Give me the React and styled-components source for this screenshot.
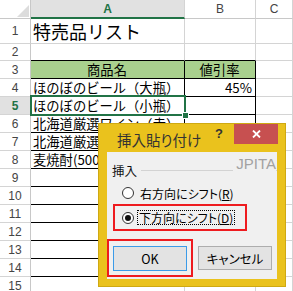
import React from 'react';
import styled, { createGlobalStyle, css } from 'styled-components';

const GlobalStyle = createGlobalStyle`
  html, body { margin: 0; padding: 0; background: #fff; overflow: hidden; }
  body { font-family: "Noto Sans CJK JP", "Noto Sans", sans-serif; }
  *, *::before, *::after { box-sizing: border-box; }
`;

const GRID = '#d4d4d4';
const HEAD_LINE = '#c8c8c8';
const GREEN = '#217346';
const RED = '#ee1b1f';

const Sheet = styled.div`
  position: relative;
  width: 293px;
  height: 291px;
  overflow: hidden;
  display: flex;
  flex-direction: column;
  background: #fff;
`;

const Row = styled.div`
  display: flex;
  flex: none;
  height: ${(p) => p.$h}px;
`;

const Corner = styled.div`
  position: relative;
  width: 31px;
  flex: none;
  border-right: 1px solid ${HEAD_LINE};
  border-bottom: 1px solid ${HEAD_LINE};
  &::after {
    content: '';
    position: absolute;
    right: 1px;
    bottom: 1px;
    border-left: 12px solid transparent;
    border-bottom: 12px solid #dcdcdc;
  }
`;

const ColHeader = styled.div`
  width: ${(p) => p.$w}px;
  flex: ${(p) => (p.$grow ? '1' : 'none')};
  display: flex;
  align-items: center;
  justify-content: center;
  font-family: "Liberation Sans", Arial, sans-serif;
  font-size: 12px;
  color: #444;
  border-right: 1px solid ${GRID};
  border-bottom: 1px solid ${HEAD_LINE};
  ${(p) =>
    p.$active &&
    css`
      background: #e1e1e1;
      color: ${GREEN};
      font-weight: bold;
      border-bottom: 2px solid ${GREEN};
    `}
`;

const RowHeader = styled.div`
  width: 31px;
  flex: none;
  display: flex;
  align-items: center;
  justify-content: center;
  font-family: "Liberation Sans", Arial, sans-serif;
  font-size: 12px;
  color: #444;
  border-right: 1px solid ${HEAD_LINE};
  border-bottom: 1px solid ${GRID};
  ${(p) =>
    p.$active &&
    css`
      background: #e1e1e1;
      color: ${GREEN};
      font-weight: bold;
    `}
`;

const Cell = styled.div`
  width: ${(p) => p.$w}px;
  flex: ${(p) => (p.$grow ? '1' : 'none')};
  display: flex;
  align-items: center;
  justify-content: ${(p) => p.$align || 'flex-start'};
  padding: 0 3px 0 2px;
  overflow: hidden;
  white-space: nowrap;
  font-size: ${(p) => (p.$big ? '18px' : '13.3px')};
  color: #000;
  background: ${(p) => (p.$fill ? '#a9d08e' : 'transparent')};
  border-right: 1px solid ${(p) => (p.$boxRight ? '#000' : GRID)};
  border-bottom: 1px solid ${(p) => (p.$boxBottom ? '#000' : GRID)};
`;

const Selection = styled.div`
  position: absolute;
  left: 30px;
  top: 95px;
  width: 156px;
  height: 21px;
  border: 2px solid ${GREEN};
  pointer-events: none;
  &::after {
    content: '';
    position: absolute;
    right: -5px;
    bottom: -5px;
    width: 7px;
    height: 7px;
    background: ${GREEN};
    border: 1px solid #fff;
  }
`;

/* ---------- dialog ---------- */

const Dialog = styled.div`
  position: absolute;
  left: 98px;
  top: 123px;
  width: 188px;
  height: 164px;
  background: #eac21d;
  border: 1px solid #cfa912;
  display: flex;
  flex-direction: column;
  font-family: "Noto Sans CJK JP", "Noto Sans", sans-serif;
  font-feature-settings: "palt";
`;

const TitleBar = styled.div`
  height: 28px;
  flex: none;
  display: flex;
  align-items: flex-start;
`;

const Title = styled.div`
  flex: 1;
  margin: 6px 0 0 18px;
  font-size: 14.5px;
  line-height: 20px;
  color: #333;
  white-space: nowrap;
`;

const Help = styled.div`
  width: 14px;
  margin: 0 8px 0 0;
  font-family: "Liberation Sans", Arial, sans-serif;
  font-weight: bold;
  font-size: 13px;
  line-height: 20px;
  text-align: center;
  color: #333;
`;

const CloseButton = styled.div`
  width: 44px;
  height: 20px;
  margin-right: 7px;
  background: #c75050;
  display: flex;
  align-items: center;
  justify-content: center;
`;

const Client = styled.div`
  position: relative;
  flex: 1;
  margin: 0 8px 7px 8px;
  padding-top: 8px;
  background: #f0f0f0;
  display: flex;
  flex-direction: column;
`;

const Watermark = styled.div`
  position: absolute;
  right: 1px;
  top: 3px;
  padding-left: 3px;
  background: #f0f0f0;
  font-family: "Liberation Sans", Arial, sans-serif;
  font-size: 15px;
  color: #a2a2a2;
`;

const GroupHeader = styled.div`
  height: 20px;
  display: flex;
  align-items: center;
  padding-left: 5px;
  font-size: 12.5px;
  color: #111;
`;

const GroupLine = styled.div`
  flex: 1;
  height: 1px;
  margin-left: 4px;
  background: #d3d3d3;
`;

const OptionRow = styled.div`
  height: 18px;
  margin-top: 4px;
  display: flex;
  align-items: center;
  padding-left: 15px;
`;

const RedFrame = styled.div`
  border: 2px solid ${RED};
`;

const OptionFrame = styled(RedFrame)`
  width: 134px;
  height: 27px;
  margin: 2px 0 0 6px;
  display: flex;
  align-items: center;
  padding-left: 7px;
`;

const Radio = styled.span`
  position: relative;
  width: 12px;
  height: 12px;
  flex: none;
  border: 1px solid #333;
  border-radius: 50%;
  background: #fff;
  ${(p) =>
    p.$checked &&
    css`
      &::after {
        content: '';
        position: absolute;
        left: 2px;
        top: 2px;
        width: 6px;
        height: 6px;
        border-radius: 50%;
        background: #111;
      }
    `}
`;

const OptionLabel = styled.span`
  margin-left: ${(p) => (p.$focus ? '3px' : '4px')};
  padding: 0 1px;
  font-size: 12px;
  line-height: 13px;
  color: #000;
  white-space: nowrap;
  border: 1px ${(p) => (p.$focus ? 'dotted #000' : 'solid transparent')};
  u { text-decoration-thickness: 1px; text-underline-offset: 1px; }
`;

const ButtonRow = styled.div`
  margin-top: 8px;
  display: flex;
  align-items: center;
  gap: 5px;
`;

const ButtonFrame = styled(RedFrame)`
  padding: 5px 4px 4px 4px;
`;

const Button = styled.div`
  width: 74px;
  height: ${(p) => (p.$primary ? 25 : 24)}px;
  display: flex;
  align-items: center;
  justify-content: center;
  background: #e3e3e3;
  border: 1px solid ${(p) => (p.$primary ? '#3c9be8' : '#adadad')};
  font-size: 12.5px;
  color: #000;
`;

const CloseIcon = () => (
  <svg width="9" height="8" viewBox="0 0 9 8">
    <path d="M1 0.5 L8 7.5 M8 0.5 L1 7.5" stroke="#fff" strokeWidth="1.8" />
  </svg>
);

const rows = [
  { n: 1, h: 25, a: '特売品リスト', big: true },
  { n: 2, h: 17, above: true },
  { n: 3, h: 18, a: '商品名', b: '値引率', head: true, table: true },
  { n: 4, h: 18, a: 'ほのぼのビール（大瓶）', b: '45%', table: true },
  { n: 5, h: 18, a: 'ほのぼのビール（小瓶）', table: true, active: true },
  { n: 6, h: 18, a: '北海道厳選ワイン（赤）', table: true },
  { n: 7, h: 18, a: '北海道厳選ワイン（白）', table: true },
  { n: 8, h: 18, a: '麦焼酎(500ml)', table: true },
  { n: 9, h: 18, table: true },
  { n: 10, h: 18, table: true },
  { n: 11, h: 18, table: true },
  { n: 12, h: 18, table: true },
  { n: 13, h: 18, table: true },
  { n: 14, h: 18, table: true },
  { n: 15, h: 18 },
];

export default function App() {
  return (
    <>
      <GlobalStyle />
      <Sheet>
        <Row $h={19}>
          <Corner />
          <ColHeader $w={154} $active>A</ColHeader>
          <ColHeader $w={71}>B</ColHeader>
          <ColHeader $w={37} $grow>C</ColHeader>
        </Row>
        {rows.map((r) => (
          <Row key={r.n} $h={r.h}>
            <RowHeader $active={r.active}>{r.n}</RowHeader>
            <Cell
              $w={154}
              $big={r.big}
              $fill={r.head}
              $align={r.head ? 'center' : 'flex-start'}
              $boxRight={r.table}
              $boxBottom={r.table || r.above}
            >
              {r.a}
            </Cell>
            <Cell
              $w={71}
              $fill={r.head}
              $align={r.head ? 'center' : 'flex-end'}
              $boxRight={r.table}
              $boxBottom={r.table || r.above}
            >
              {r.b}
            </Cell>
            <Cell $w={37} $grow />
          </Row>
        ))}
        <Selection />

        <Dialog>
          <TitleBar>
            <Title>挿入貼り付け</Title>
            <Help>?</Help>
            <CloseButton>
              <CloseIcon />
            </CloseButton>
          </TitleBar>
          <Client>
            <Watermark>JPITA</Watermark>
            <GroupHeader>
              挿入
              <GroupLine />
            </GroupHeader>
            <OptionRow>
              <Radio />
              <OptionLabel>
                右方向にシフト(<u>R</u>)
              </OptionLabel>
            </OptionRow>
            <OptionFrame>
              <Radio $checked />
              <OptionLabel $focus>
                下方向にシフト(<u>D</u>)
              </OptionLabel>
            </OptionFrame>
            <ButtonRow>
              <ButtonFrame>
                <Button $primary>OK</Button>
              </ButtonFrame>
              <Button>キャンセル</Button>
            </ButtonRow>
          </Client>
        </Dialog>
      </Sheet>
    </>
  );
}
